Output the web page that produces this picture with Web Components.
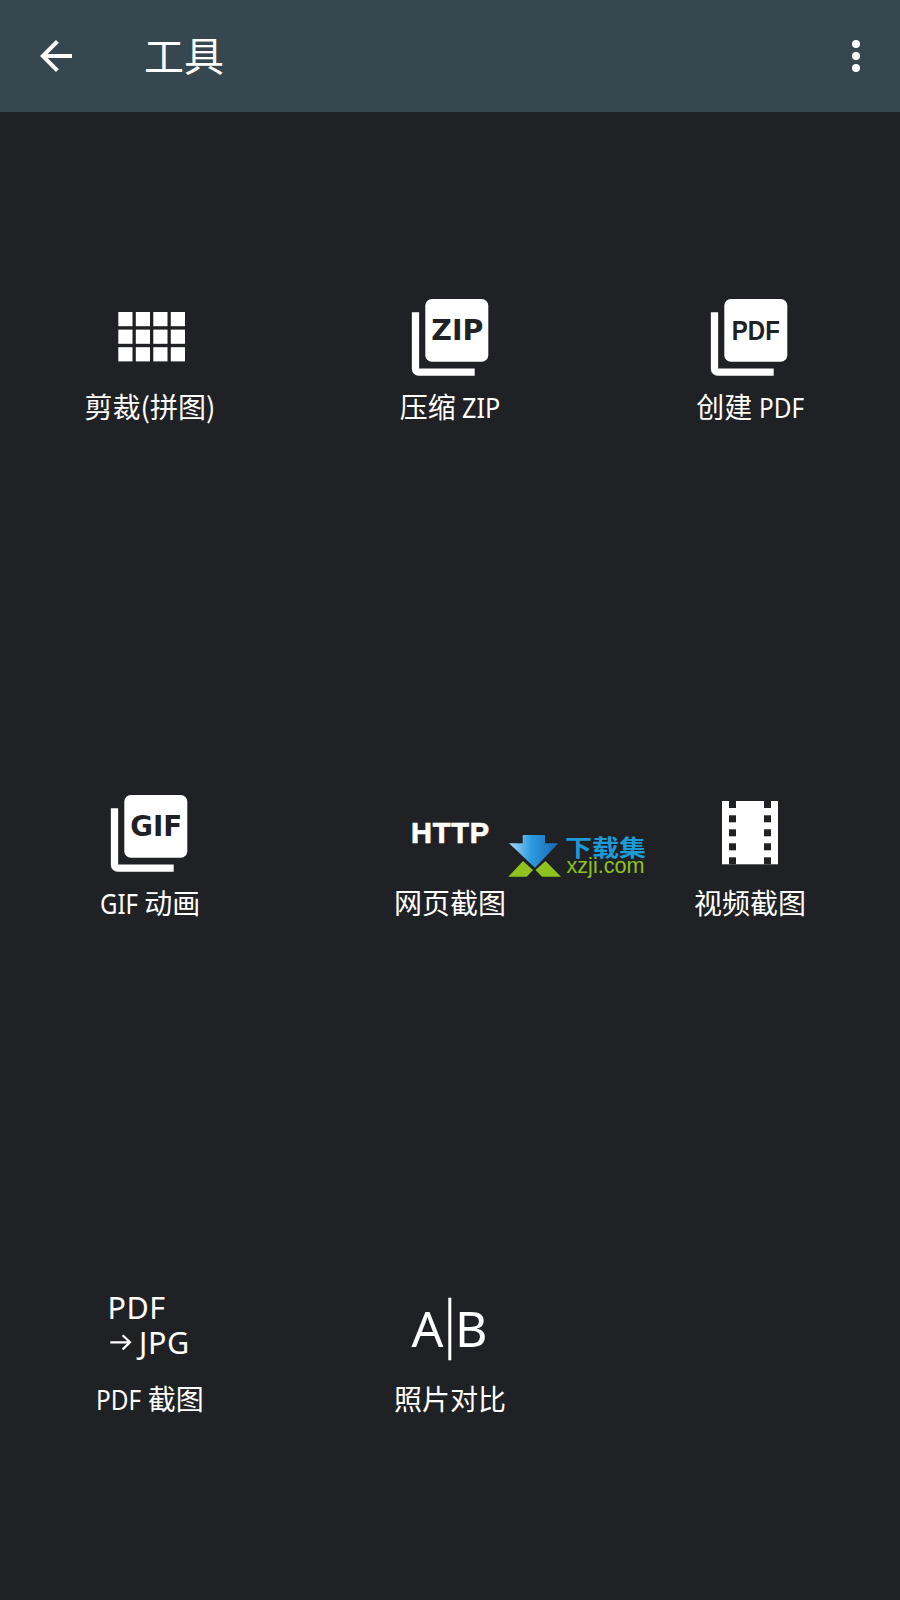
<!DOCTYPE html>
<html lang="zh">
<head>
<meta charset="utf-8">
<title>工具</title>
<style>
html, body { margin: 0; padding: 0; background: #202124; }
body {
    width: 900px;
    height: 1600px;
    font-family: "Noto Sans CJK SC", "Noto Sans", sans-serif;
    color: #fff;
    position: relative;
    overflow: hidden;
}
</style>
</head>
<body>
<tools-page>
    <app-toolbar title-text="工具"></app-toolbar>
    <tool-grid>
        <tool-item icon="grid">剪裁(拼图)</tool-item>
        <tool-item icon="stack" tag="ZIP" shift="1">压缩 <latin-text w="38" scale="0.9">ZIP</latin-text></tool-item>
        <tool-item icon="stack" tag="PDF" narrow>创建 <latin-text w="45" scale="0.867">PDF</latin-text></tool-item>
        <tool-item icon="stack" tag="GIF"><latin-text w="38" scale="0.856">GIF</latin-text> 动画</tool-item>
        <tool-item icon="http">网页截图</tool-item>
        <tool-item icon="film">视频截图</tool-item>
        <tool-item icon="pdfjpg"><latin-text w="45" scale="0.867">PDF</latin-text> 截图</tool-item>
        <tool-item icon="ab">照片对比</tool-item>
    </tool-grid>
    <site-mark></site-mark>
</tools-page>

<script>
const BG = '#202124';
const SANS = `'Noto Sans', sans-serif`;

class ToolsPage extends HTMLElement {
    connectedCallback() {
        const shadow = this.attachShadow({ mode: 'open' });
        shadow.innerHTML = `
<style>
:host { display: flex; flex-direction: column; width: 900px; height: 1600px; }
</style>
<slot></slot>`;
    }
}

class AppToolbar extends HTMLElement {
    connectedCallback() {
        const shadow = this.attachShadow({ mode: 'open' });
        shadow.innerHTML = `
<style>
:host { display: block; flex: none; background: #37474f; }
.bar { height: 112px; display: flex; align-items: center; padding: 0 20px 0 32px; }
svg { width: 48px; height: 48px; fill: #fff; display: block; flex: none; }
h1 {
    flex: 1;
    margin: 0 0 4px 64px;
    font-size: 40px;
    font-weight: 400;
    line-height: 48px;
}
</style>
<div class="bar">
    <svg viewBox="0 0 24 24"><path d="M20 11H7.83l5.59-5.59L12 4l-8 8 8 8 1.41-1.41L7.83 13H20v-2z"/></svg>
    <h1>${this.getAttribute('title-text') || ''}</h1>
    <svg viewBox="0 0 24 24"><circle cx="12" cy="6" r="2"/><circle cx="12" cy="12" r="2"/><circle cx="12" cy="18" r="2"/></svg>
</div>`;
    }
}

class ToolGrid extends HTMLElement {
    connectedCallback() {
        const shadow = this.attachShadow({ mode: 'open' });
        shadow.innerHTML = `
<style>
:host {
    display: grid;
    flex: 1;
    grid-template-columns: repeat(3, 300px);
    grid-template-rows: repeat(3, 496px);
}
</style>
<slot></slot>`;
    }
}

// narrow latin inside the labels, w is the width it takes in the line
class LatinText extends HTMLElement {
    connectedCallback() {
        const shadow = this.attachShadow({ mode: 'open' });
        shadow.innerHTML = `
<style>
:host { display: inline-block; width: ${this.getAttribute('w')}px; font-family: 'Noto Sans', sans-serif; }
span {
    display: inline-block;
    transform-origin: 0 50%;
    transform: scaleX(${this.getAttribute('scale')});
    white-space: nowrap;
}
</style>
<span><slot></slot></span>`;
    }
}

// icons are drawn on an 80x80 box
function gridIcon() {
    let cells = '';
    for (let r = 0; r < 3; r++) {
        for (let c = 0; c < 4; c++) {
            cells += `<rect x="${8.3 + c * 17.5}" y="${16 + r * 17.6}" width="14.2" height="14.2"/>`;
        }
    }
    return `<g fill="#fff">${cells}</g>`;
}

function stackIcon(tag, shift, narrow) {
    const font = narrow
        ? `x="45.8" font-family="'Liberation Sans',sans-serif" font-size="28" font-weight="700" textLength="48"`
        : `x="46.3" font-family="'DejaVu Sans',sans-serif" font-size="27.5" font-weight="700" textLength="52"`;
    return `<g transform="translate(${shift} 0)">
        <path d="M4.5 16.3V73a3.2 3.2 0 0 0 3.2 3.2H63.7" fill="none" stroke="#fff" stroke-width="7.3"/>
        <rect x="14.3" y="3" width="63" height="62.7" rx="6.5" fill="#fff"/>
        <text y="44" text-anchor="middle" fill="${BG}" ${font} lengthAdjust="spacingAndGlyphs">${tag}</text>
    </g>`;
}

function httpIcon() {
    return `<text x="1" y="51.3" fill="#fff" stroke="#fff" stroke-width="0.7" font-family="'Liberation Sans',sans-serif" font-size="29" font-weight="700"
        textLength="78" lengthAdjust="spacing">HTTP</text>`;
}

function filmIcon() {
    let holes = '';
    [9, 23.3, 37.3, 51.3, 65.3].forEach((y) => {
        holes += `<rect x="19" y="${y}" width="7" height="7"/><rect x="54" y="${y}" width="7" height="7"/>`;
    });
    return `<rect x="12" y="9" width="56" height="63.3" fill="#fff"/><g fill="${BG}">${holes}</g>`;
}

function pdfJpgIcon() {
    return `<g fill="#fff" font-family="${SANS}" font-size="30.5" letter-spacing="0.6">
        <text x="-2.6" y="31.3">PDF</text>
        <text x="29" y="66">JPG</text>
    </g>
    <path d="M0.3 54.3H20M12.6 47.2l7.4 7.1-7.4 7.1" fill="none" stroke="#fff" stroke-width="2.2"/>`;
}

function abIcon() {
    return `<g fill="#fff" font-family="${SANS}" font-size="50">
        <text x="1.5" y="58.7">A</text>
        <text x="45" y="58.7">B</text>
    </g>
    <rect x="38.3" y="9.7" width="3" height="62.6" fill="#fff"/>`;
}

class ToolItem extends HTMLElement {
    connectedCallback() {
        const shadow = this.attachShadow({ mode: 'open' });
        const kind = this.getAttribute('icon');
        let art = '';
        if (kind === 'grid') art = gridIcon();
        if (kind === 'stack') art = stackIcon(this.getAttribute('tag'), this.getAttribute('shift') || 0, this.hasAttribute('narrow'));
        if (kind === 'http') art = httpIcon();
        if (kind === 'film') art = filmIcon();
        if (kind === 'pdfjpg') art = pdfJpgIcon();
        if (kind === 'ab') art = abIcon();

        shadow.innerHTML = `
<style>
:host {
    display: flex;
    flex-direction: column;
    align-items: center;
    padding-top: 184px;
    font-family: 'Noto Sans CJK SC', sans-serif;
    font-size: 28px;
    line-height: 48px;
    color: #fff;
}
svg { width: 80px; height: 80px; display: block; overflow: visible; }
.label { margin-top: 6px; height: 48px; white-space: nowrap; }
</style>
<svg viewBox="0 0 80 80">${art}</svg>
<div class="label"><slot></slot></div>`;
    }
}

class SiteMark extends HTMLElement {
    connectedCallback() {
        const shadow = this.attachShadow({ mode: 'open' });
        shadow.innerHTML = `
<style>
:host { position: absolute; left: 506px; top: 832px; width: 142px; height: 48px; }
svg { position: absolute; left: 0; top: 0; width: 56px; height: 48px; }
.name {
    position: absolute;
    left: 59px;
    top: 4px;
    font: 700 27px/21px 'Noto Sans CJK SC', sans-serif;
    color: #1e9ad6;
    white-space: nowrap;
    transform: scaleY(0.86);
}
.url {
    position: absolute;
    left: 60.5px;
    top: 27px;
    font: 400 21.6px/14px 'Liberation Sans', sans-serif;
    color: #8dc21f;
    white-space: nowrap;
}
</style>
<svg viewBox="0 0 56 48">
    <defs>
        <linearGradient id="arrow" x1="0" x2="1" y1="0" y2="0">
            <stop offset="0" stop-color="#a9dcf5"/>
            <stop offset="0.45" stop-color="#2a9be0"/>
            <stop offset="1" stop-color="#1b66b0"/>
        </linearGradient>
    </defs>
    <path d="M3 11.3H16.7V3H39V11.3H52.3L29 35.7z" fill="url(#arrow)"/>
    <path d="M2.3 44.7L17 29L27 38L20.7 44.7zM29.5 38L39.5 29L55 44.7H36z" fill="#8dc21f"/>
</svg>
<span class="name">下载集</span>
<span class="url">xzji.com</span>`;
    }
}

customElements.define('tools-page', ToolsPage);
customElements.define('app-toolbar', AppToolbar);
customElements.define('tool-grid', ToolGrid);
customElements.define('latin-text', LatinText);
customElements.define('tool-item', ToolItem);
customElements.define('site-mark', SiteMark);
</script>
</body>
</html>
